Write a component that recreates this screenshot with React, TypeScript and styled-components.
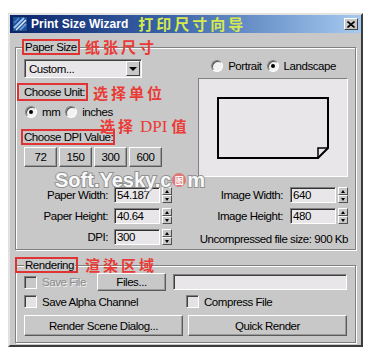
import styled, { createGlobalStyle } from "styled-components";

const UI_FONT = `"Liberation Sans", Arial, sans-serif`;
const CJK_FONT = `"Noto Sans CJK SC", "Noto Sans CJK TC", sans-serif`;

const GlobalStyle = createGlobalStyle`
  html, body {
    margin: 0;
    padding: 0;
    background: #ffffff;
  }
`;

const Page = styled.div`
  width: 374px;
  height: 355px;
  box-sizing: border-box;
  padding: 13px 0 0 8px;
  background: #ffffff;
`;

const Window = styled.div`
  width: 355px;
  box-sizing: border-box;
  display: flex;
  flex-direction: column;
  background: #c8c8c8;
  border: 2px solid;
  border-color: #e2e2e2 #3c3c3c #3c3c3c #e2e2e2;
  font-family: ${UI_FONT};
  font-size: 11.5px;
  letter-spacing: -0.45px;
  color: #000000;
`;

const TitleBar = styled.div`
  height: 18px;
  display: flex;
  align-items: center;
  padding: 0 3px 0 2px;
  letter-spacing: 0;
  background: linear-gradient(90deg, #0a246a 0%, #3a64a8 45%, #a6caf0 100%);
`;

const TitleText = styled.span`
  margin-left: 3px;
  font-family: "Liberation Sans", Arial, sans-serif;
  font-weight: 700;
  font-size: 12px;
  color: #ffffff;
`;

const TitleNote = styled.span`
  margin-left: 10px;
  font-family: ${CJK_FONT};
  font-weight: 700;
  font-size: 15px;
  letter-spacing: 3px;
  line-height: 18px;
  color: #d6ea4e;
`;

const CloseButton = styled.div`
  margin-left: auto;
  width: 14px;
  height: 12px;
  box-sizing: border-box;
  display: flex;
  align-items: center;
  justify-content: center;
  background: #c8c8c8;
  border: 1px solid;
  border-color: #ffffff #404040 #404040 #ffffff;
`;

const Body = styled.div`
  display: flex;
  flex-direction: column;
  gap: 7px;
  padding: 6px 5px 2px 5px;
`;

const GroupBox = styled.fieldset<{ $pad: string }>`
  margin: 0;
  min-width: 0;
  padding: ${(p) => p.$pad};
  border: 1px solid #808080;
  box-shadow: inset 1px 1px 0 #ffffff, 1px 1px 0 #ffffff;
`;

const GroupLegend = styled.legend`
  position: relative;
  padding: 0 1px;
  line-height: 16px;
  background: #c8c8c8;
`;

const Marked = styled.span<{ $box: string }>`
  position: relative;
  display: inline-block;
  line-height: 16px;
  &::after {
    content: "";
    position: absolute;
    inset: ${(p) => p.$box};
    border: 2px solid #e03434;
    pointer-events: none;
  }
`;

const Note = styled.span<{ $left: number; $top: number }>`
  position: absolute;
  left: ${(p) => p.$left}px;
  top: ${(p) => p.$top}px;
  white-space: nowrap;
  font-family: ${CJK_FONT};
  font-weight: 700;
  font-size: 15px;
  line-height: 16px;
  letter-spacing: 3px;
  color: #ea3b36;
`;

const NoteLatin = styled.span`
  font-family: "Liberation Serif", "Times New Roman", serif;
  font-weight: 400;
  font-size: 17px;
  letter-spacing: 0;
  margin: 0 4px;
`;

const PaperGrid = styled.div`
  position: relative;
  display: grid;
  grid-template-columns: 166px 150px;
  column-gap: 8px;
  row-gap: 10px;
`;

const Column = styled.div`
  display: flex;
  flex-direction: column;
`;

const Dropdown = styled.div`
  width: 118px;
  height: 19px;
  box-sizing: border-box;
  display: flex;
  align-items: center;
  justify-content: space-between;
  padding: 0 1px 0 4px;
  background: #e8e6e8;
  border: 1px solid;
  border-color: #808080 #ffffff #ffffff #808080;
  box-shadow: inset 1px 1px 0 #404040;
`;

const DropArrow = styled.div`
  width: 14px;
  height: 15px;
  box-sizing: border-box;
  display: flex;
  align-items: center;
  justify-content: center;
  background: #c8c8c8;
  border: 1px solid;
  border-color: #ffffff #404040 #404040 #ffffff;
  &::after {
    content: "";
    border-left: 4px solid transparent;
    border-right: 4px solid transparent;
    border-top: 4px solid #000000;
  }
`;

const LabelLine = styled.div<{ $mt: number }>`
  position: relative;
  margin-top: ${(p) => p.$mt}px;
  height: 16px;
`;

const OptionRow = styled.div<{ $mt?: number; $center?: boolean }>`
  display: flex;
  align-items: center;
  justify-content: ${(p) => (p.$center ? "center" : "flex-start")};
  gap: 5px;
  height: 14px;
  margin-top: ${(p) => p.$mt ?? 0}px;
  padding-left: 1px;
`;

const Option = styled.label`
  display: flex;
  align-items: center;
  gap: 5px;
`;

const RadioDot = styled.span<{ $on?: boolean }>`
  width: 12px;
  height: 12px;
  box-sizing: border-box;
  display: inline-flex;
  align-items: center;
  justify-content: center;
  border-radius: 50%;
  background: #f2f2f2;
  border: 1px solid;
  border-color: #808080 #ffffff #ffffff #808080;
  box-shadow: inset 1px 1px 0 #505050;
  &::after {
    content: "";
    display: ${(p) => (p.$on ? "block" : "none")};
    width: 4px;
    height: 4px;
    border-radius: 50%;
    background: #000000;
  }
`;

const ButtonRow = styled.div`
  display: flex;
  gap: 2px;
  margin-top: 2px;
`;

const Button = styled.div<{ $w: number; $h: number }>`
  width: ${(p) => p.$w}px;
  height: ${(p) => p.$h}px;
  box-sizing: border-box;
  display: flex;
  align-items: center;
  justify-content: center;
  background: #c8c8c8;
  border: 1px solid;
  border-color: #ffffff #5a5a5a #5a5a5a #ffffff;
  box-shadow: inset -1px -1px 0 #9a9a9a;
`;

const Preview = styled.div`
  margin-top: 5px;
  height: 99px;
  box-sizing: border-box;
  display: flex;
  align-items: center;
  justify-content: center;
  background: #e8e6e8;
  border: 1px solid;
  border-color: #808080 #ffffff #ffffff #808080;
`;

const FieldStack = styled.div<{ $pr: number }>`
  display: flex;
  flex-direction: column;
  gap: 5px;
  padding-right: ${(p) => p.$pr}px;
`;

const FieldRow = styled.div`
  display: flex;
  align-items: center;
  justify-content: flex-end;
  height: 16px;
`;

const FieldLabel = styled.span<{ $gap: number }>`
  margin-right: ${(p) => p.$gap}px;
`;

const NumberBox = styled.div`
  width: 46px;
  height: 16px;
  box-sizing: border-box;
  padding-left: 2px;
  line-height: 14px;
  background: #e8e6e8;
  border: 1px solid;
  border-color: #808080 #ffffff #ffffff #808080;
  box-shadow: inset 1px 1px 0 #303030;
`;

const Spinner = styled.div`
  width: 10px;
  height: 16px;
  margin-left: 2px;
  display: flex;
  flex-direction: column;
`;

const SpinHalf = styled.div<{ $down?: boolean }>`
  flex: 1;
  box-sizing: border-box;
  display: flex;
  align-items: center;
  justify-content: center;
  background: #c8c8c8;
  border: 1px solid;
  border-color: #ffffff #505050 #505050 #ffffff;
  &::after {
    content: "";
    border-left: 2px solid transparent;
    border-right: 2px solid transparent;
    ${(p) =>
      p.$down ? "border-top: 3px solid #000000;" : "border-bottom: 3px solid #000000;"}
  }
`;

const SizeNote = styled.div`
  margin-top: 8px;
  height: 14px;
  line-height: 14px;
  text-align: right;
  white-space: nowrap;
`;

const Watermark = styled.div`
  position: absolute;
  left: 31px;
  top: 111px;
  display: flex;
  align-items: center;
  font-family: "Liberation Sans", Arial, sans-serif;
  font-weight: 700;
  font-size: 20px;
  line-height: 20px;
  letter-spacing: 0;
  color: #ffffff;
  -webkit-text-stroke: 2px #8c8c8c;
  paint-order: stroke fill;
  opacity: 0.9;
  pointer-events: none;
`;

const WatermarkBadge = styled.span`
  width: 14px;
  height: 14px;
  margin: 0 1px;
  border-radius: 50%;
  display: inline-flex;
  align-items: center;
  justify-content: center;
  background: #e07070;
  font-family: ${CJK_FONT};
  font-size: 9px;
  line-height: 9px;
  -webkit-text-stroke: 0;
  color: #ffffff;
`;

const RenderRows = styled.div`
  display: grid;
  grid-template-columns: 159px 159px;
  column-gap: 5px;
`;

const FileRow = styled.div`
  grid-column: 1 / span 2;
  display: flex;
  align-items: center;
  height: 18px;
`;

const CheckOption = styled.label<{ $disabled?: boolean; $w?: number; $shift?: number }>`
  display: flex;
  align-items: center;
  gap: 5px;
  width: ${(p) => (p.$w ? `${p.$w}px` : "auto")};
  margin-left: ${(p) => p.$shift ?? 0}px;
  color: ${(p) => (p.$disabled ? "#8a8a8a" : "#000000")};
  text-shadow: ${(p) => (p.$disabled ? "1px 1px 0 #f0f0f0" : "none")};
`;

const CheckBox = styled.span<{ $disabled?: boolean }>`
  width: 13px;
  height: 13px;
  box-sizing: border-box;
  background: ${(p) => (p.$disabled ? "#c8c8c8" : "#e4e2e4")};
  border: 1px solid;
  border-color: #808080 #ffffff #ffffff #808080;
  box-shadow: inset 1px 1px 0 #404040;
`;

const TextField = styled.div`
  margin-left: 7px;
  width: 174px;
  height: 16px;
  box-sizing: border-box;
  background: #e8e6e8;
  border: 1px solid;
  border-color: #808080 #ffffff #ffffff #808080;
  box-shadow: inset 1px 1px 0 #404040;
`;

const CheckRow = styled.div`
  display: flex;
  align-items: center;
  height: 13px;
  margin-top: 4px;
`;

const ActionRow = styled.div`
  margin-top: 7px;
`;

const AppIcon = () => (
  <svg width="16" height="16" viewBox="0 0 16 16">
    <rect x="0.5" y="0.5" width="15" height="15" fill="#1d4f9c" stroke="#0c2a5c" />
    <path d="M2 12 L12 2" stroke="#9cc4f0" strokeWidth="2" />
    <path d="M4 14 L14 4" stroke="#e8f2ff" strokeWidth="1.5" />
    <path d="M8 14 L14 8" stroke="#6a9ad8" strokeWidth="2" />
    <path d="M2 7 L7 2" stroke="#5a8ad0" strokeWidth="1.5" />
  </svg>
);

const CloseGlyph = () => (
  <svg width="8" height="7" viewBox="0 0 8 7">
    <path d="M0.5 0.5 L7.5 6.5 M7.5 0.5 L0.5 6.5" stroke="#000" strokeWidth="1.6" />
  </svg>
);

const PaperSheet = () => (
  <svg width="112" height="62" viewBox="0 0 112 62">
    <path d="M1 1 H111 V51 L101 61 H1 Z" fill="none" stroke="#000" strokeWidth="2" />
    <path d="M101 61 V51 H111" fill="none" stroke="#000" strokeWidth="1.5" />
  </svg>
);

const Spin = () => (
  <Spinner>
    <SpinHalf />
    <SpinHalf $down />
  </Spinner>
);

const Field = ({ label, value, gap }: { label: string; value: string; gap: number }) => (
  <FieldRow>
    <FieldLabel $gap={gap}>{label}</FieldLabel>
    <NumberBox>{value}</NumberBox>
    <Spin />
  </FieldRow>
);

const App = () => {
  return (
    <>
      <GlobalStyle />
      <Page>
        <Window>
          <TitleBar>
            <AppIcon />
            <TitleText>Print Size Wizard</TitleText>
            <TitleNote>打印尺寸向导</TitleNote>
            <CloseButton>
              <CloseGlyph />
            </CloseButton>
          </TitleBar>
          <Body>
            <GroupBox $pad="4px 7px 3px 8px">
              <GroupLegend>
                <Marked $box="0 -3px 0 -3px">Paper Size</Marked>
                <Note $left={61} $top={0}>纸张尺寸</Note>
              </GroupLegend>
              <PaperGrid>
                <Column>
                  <Dropdown>
                    <span>Custom...</span>
                    <DropArrow />
                  </Dropdown>
                  <LabelLine $mt={6}>
                    <Marked $box="-1px -3px -1px -7px">Choose Unit:</Marked>
                    <Note $left={69} $top={1}>选择单位</Note>
                  </LabelLine>
                  <OptionRow $mt={5}>
                    <Option>
                      <RadioDot $on />
                      mm
                    </Option>
                    <Option>
                      <RadioDot />
                      inches
                    </Option>
                  </OptionRow>
                  <LabelLine $mt={10}>
                    <Marked $box="0 -2px 0 -3px">Choose DPI Value:</Marked>
                    <Note $left={76} $top={-11}>
                      选择<NoteLatin>DPI</NoteLatin>值
                    </Note>
                  </LabelLine>
                  <ButtonRow>
                    <Button $w={33} $h={20}>72</Button>
                    <Button $w={33} $h={20}>150</Button>
                    <Button $w={33} $h={20}>300</Button>
                    <Button $w={33} $h={20}>600</Button>
                  </ButtonRow>
                </Column>
                <Column>
                  <OptionRow $center>
                    <Option>
                      <RadioDot />
                      Portrait
                    </Option>
                    <Option>
                      <RadioDot $on />
                      Landscape
                    </Option>
                  </OptionRow>
                  <Preview>
                    <PaperSheet />
                  </Preview>
                </Column>
                <FieldStack $pr={18}>
                  <Field label="Paper Width:" value="54.187" gap={6} />
                  <Field label="Paper Height:" value="40.64" gap={6} />
                  <Field label="DPI:" value="300" gap={6} />
                </FieldStack>
                <Column>
                  <FieldStack $pr={0}>
                    <Field label="Image Width:" value="640" gap={7} />
                    <Field label="Image Height:" value="480" gap={7} />
                  </FieldStack>
                  <SizeNote>Uncompressed file size: 900 Kb</SizeNote>
                </Column>
                <Watermark>
                  Soft.Yesky.c<WatermarkBadge>图</WatermarkBadge>m
                </Watermark>
              </PaperGrid>
            </GroupBox>
            <GroupBox $pad="0 7px 6px 8px">
              <GroupLegend>
                <Marked $box="0 -4px 0 -10px">Rendering</Marked>
                <Note $left={61} $top={0}>渲染区域</Note>
              </GroupLegend>
              <RenderRows>
                <FileRow>
                  <CheckOption $disabled $w={73}>
                    <CheckBox $disabled />
                    Save File
                  </CheckOption>
                  <Button $w={69} $h={18}>Files...</Button>
                  <TextField />
                </FileRow>
                <CheckRow>
                  <CheckOption>
                    <CheckBox />
                    Save Alpha Channel
                  </CheckOption>
                </CheckRow>
                <CheckRow>
                  <CheckOption $shift={-2}>
                    <CheckBox />
                    Compress File
                  </CheckOption>
                </CheckRow>
                <ActionRow>
                  <Button $w={159} $h={21}>Render Scene Dialog...</Button>
                </ActionRow>
                <ActionRow>
                  <Button $w={159} $h={21}>Quick Render</Button>
                </ActionRow>
              </RenderRows>
            </GroupBox>
          </Body>
        </Window>
      </Page>
    </>
  );
};

export default App;
